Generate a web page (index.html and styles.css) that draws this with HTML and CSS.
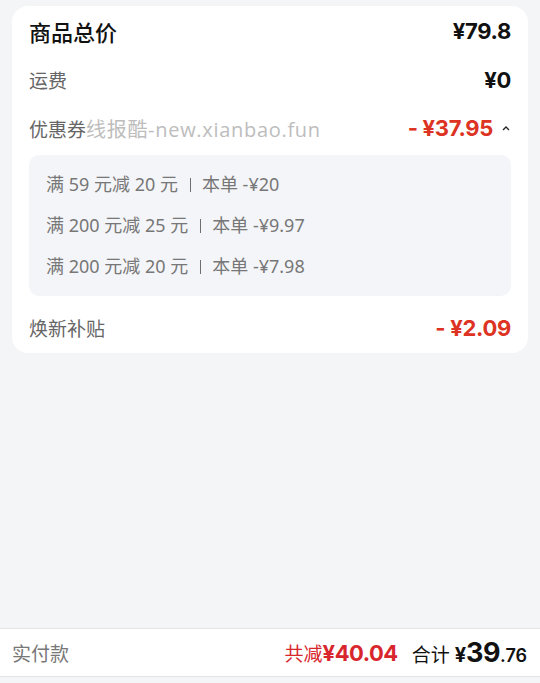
FILE: index.html
```html
<!DOCTYPE html>
<html lang="zh-CN">
<head>
<meta charset="utf-8">
<title>订单金额</title>
<link rel="stylesheet" href="styles.css">
</head>
<body>
<div class="page">
  <div class="card">
    <div class="row first">
      <span class="label strong">商品总价</span>
      <span class="amount">¥79.8</span>
    </div>
    <div class="row">
      <span class="label">运费</span>
      <span class="amount">¥0</span>
    </div>
    <div class="row coupon-row">
      <span class="label">优惠券<span class="wm">线报酷-new.xianbao.fun</span></span>
      <span class="amount red">- ¥37.95<span class="caret"><svg width="10" height="8" viewBox="0 0 10 8"><path d="M2 6 L5 3 L8 6" fill="none" stroke="#222" stroke-width="1.3"/></svg></span></span>
    </div>
    <div class="coupons">
      <div class="coupon">满 59 元减 20 元<span class="sep"></span>本单 -¥20</div>
      <div class="coupon">满 200 元减 25 元<span class="sep"></span>本单 -¥9.97</div>
      <div class="coupon">满 200 元减 20 元<span class="sep"></span>本单 -¥7.98</div>
    </div>
    <div class="row last">
      <span class="label">焕新补贴</span>
      <span class="amount red">- ¥2.09</span>
    </div>
  </div>
  <div class="spacer"></div>
  <div class="bar">
    <span class="bar-label">实付款</span>
    <div class="bar-right">
      <span class="saved">共减<b>¥40.04</b></span>
      <span class="total">合计 <span class="yen">¥</span><b class="big">39</b><span class="dec">.76</span></span>
    </div>
  </div>
</div>
</body>
</html>
```

FILE: styles.css
```css
html, body {
  margin: 0;
  padding: 0;
}
body {
  background: #f4f5f7;
  font-family: "Noto Sans", "Noto Sans CJK SC", sans-serif;
  color: #1a1a1a;
}
.page {
  height: 683px;
  display: flex;
  flex-direction: column;
}
.card {
  margin: 6px 12px 0;
  padding: 2px 17px 1px;
  background: #fff;
  border-radius: 16px;
}
.row {
  height: 48px;
  display: flex;
  align-items: center;
  justify-content: space-between;
}
.row.first {
  padding-bottom: 3px;
  height: 45px;
}
.row.last {
  margin-top: 8px;
}
.label {
  font-size: 19px;
  color: #666;
  white-space: nowrap;
}
.label.strong {
  font-size: 22px;
  color: #111;
  font-weight: 500;
}
.wm {
  color: #bdbdbd;
  font-family: "Open Sans", "Noto Sans CJK SC", sans-serif;
  font-size: 20px;
  letter-spacing: 0.7px;
}
.amount {
  font-family: "Inter", "Noto Sans CJK SC", sans-serif;
  font-size: 22px;
  font-weight: 700;
  color: #111;
  display: flex;
  align-items: center;
  letter-spacing: -0.3px;
}
.amount.red {
  color: #dd3322;
}
.caret {
  display: inline-flex;
  margin-left: 8px;
  margin-right: -18px;
  width: 10px;
}
.coupon-row {
  padding-right: 18px;
}
.coupons {
  margin-top: 3px;
  background: #f4f5f8;
  border-radius: 10px;
  padding: 9px 17px;
}
.coupon {
  height: 41px;
  line-height: 41px;
  font-size: 18px;
  color: #777;
  white-space: nowrap;
}
.coupon .sep {
  display: inline-block;
  width: 1px;
  height: 14px;
  background: #6f6f6f;
  margin: 0 11px 0 12px;
  vertical-align: -1px;
}
.spacer {
  flex: 1;
}
.bar {
  height: 47px;
  margin-bottom: 6px;
  background: #fff;
  border-top: 1px solid #e3e4e6;
  border-bottom: 1px solid #e3e4e6;
  display: flex;
  align-items: center;
  justify-content: space-between;
  padding: 0 13px 0 12px;
}
.bar-label {
  font-size: 19px;
  color: #777;
}
.bar-right {
  display: flex;
  align-items: center;
  gap: 14px;
}
.saved {
  font-size: 19px;
  color: #d9262d;
}
.saved b {
  font-family: "Inter", sans-serif;
  font-size: 22px;
  font-weight: 700;
  letter-spacing: -0.5px;
}
.total {
  font-size: 19px;
  color: #111;
  display: flex;
  align-items: baseline;
}
.total .yen {
  font-family: "Inter", sans-serif;
  font-weight: 700;
  font-size: 20px;
  margin-left: 5px;
}
.total .big {
  font-family: "Inter", sans-serif;
  font-weight: 700;
  font-size: 27px;
  letter-spacing: -0.5px;
}
.total .dec {
  font-family: "Inter", sans-serif;
  font-weight: 600;
  font-size: 18px;
}
```
